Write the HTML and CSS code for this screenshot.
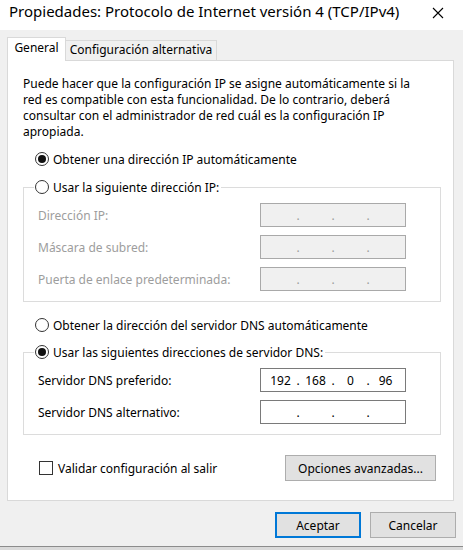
FILE: index.html
```html
<!DOCTYPE html>
<html lang="es">
<head>
<meta charset="utf-8">
<title>Propiedades: Protocolo de Internet versión 4 (TCP/IPv4)</title>
<link rel="stylesheet" href="styles.css">
</head>
<body>
<div class="window">
  <div class="titlebar">
    <span class="title">Propiedades: Protocolo de Internet versión 4 (TCP/IPv4)</span>
    <span class="close"><svg width="12" height="12" viewBox="0 0 12 12"><path d="M1 1 L11 11 M11 1 L1 11" stroke="#000" stroke-width="1.1" fill="none"/></svg></span>
  </div>
  <div class="main">
    <div class="tabs">
      <div class="tab active">General</div>
      <div class="tab">Configuración alternativa</div>
    </div>
    <div class="panel">
      <p class="intro">Puede hacer que la configuración IP se asigne automáticamente si la<br>red es compatible con esta funcionalidad. De lo contrario, deberá<br>consultar con el administrador de red cuál es la configuración IP<br>apropiada.</p>

      <div class="option first"><span class="radio checked"></span><span>Obtener una dirección IP automáticamente</span></div>

      <fieldset class="group">
        <legend><span class="option"><span class="radio"></span><span>Usar la siguiente dirección IP:</span></span></legend>
        <div class="field disabled">
          <span class="flabel">Dirección IP:</span>
          <div class="ip"><span class="seg"></span><span class="dot">.</span><span class="seg"></span><span class="dot">.</span><span class="seg"></span><span class="dot">.</span><span class="seg"></span></div>
        </div>
        <div class="field disabled">
          <span class="flabel">Máscara de subred:</span>
          <div class="ip"><span class="seg"></span><span class="dot">.</span><span class="seg"></span><span class="dot">.</span><span class="seg"></span><span class="dot">.</span><span class="seg"></span></div>
        </div>
        <div class="field disabled">
          <span class="flabel">Puerta de enlace predeterminada:</span>
          <div class="ip"><span class="seg"></span><span class="dot">.</span><span class="seg"></span><span class="dot">.</span><span class="seg"></span><span class="dot">.</span><span class="seg"></span></div>
        </div>
      </fieldset>

      <div class="option dns-auto"><span class="radio"></span><span>Obtener la dirección del servidor DNS automáticamente</span></div>

      <fieldset class="group dns">
        <legend><span class="option"><span class="radio checked"></span><span>Usar las siguientes direcciones de servidor DNS:</span></span></legend>
        <div class="field">
          <span class="flabel">Servidor DNS preferido:</span>
          <div class="ip"><span class="seg">192</span><span class="dot">.</span><span class="seg">168</span><span class="dot">.</span><span class="seg">0</span><span class="dot">.</span><span class="seg">96</span></div>
        </div>
        <div class="field">
          <span class="flabel">Servidor DNS alternativo:</span>
          <div class="ip"><span class="seg"></span><span class="dot">.</span><span class="seg"></span><span class="dot">.</span><span class="seg"></span><span class="dot">.</span><span class="seg"></span></div>
        </div>
      </fieldset>

      <div class="bottom-row">
        <div class="check"><span class="checkbox"></span><span>Validar configuración al salir</span></div>
        <button class="btn adv">Opciones avanzadas...</button>
      </div>
    </div>
    <div class="footer">
      <button class="btn primary">Aceptar</button>
      <button class="btn cancel">Cancelar</button>
    </div>
  </div>
  <div class="edge"></div>
</div>
</body>
</html>
```

FILE: styles.css
```css
* { box-sizing: border-box; }
html, body { margin: 0; padding: 0; }
body {
  width: 463px;
  height: 550px;
  overflow: hidden;
  background: #f0f0f0;
  font-family: "Noto Sans", "Open Sans", sans-serif;
  font-size: 12px;
  color: #000;
}
.window { display: flex; flex-direction: column; width: 463px; height: 550px; }

.titlebar {
  height: 30px;
  background: #fff;
  display: flex;
  justify-content: space-between;
  align-items: flex-start;
  padding: 1px 0 0 9px;
}
.title { font-size: 15px; line-height: 20px; white-space: nowrap; }
.close { width: 46px; height: 24px; display: flex; align-items: center; justify-content: center; padding-right: 4px; }

.main { flex: 1; display: flex; flex-direction: column; }

.tabs {
  display: flex;
  align-items: flex-end;
  margin: 7px 0 0 7px;
  height: 23px;
}
.tab {
  border: 1px solid #d9d9d9;
  border-bottom: none;
  text-align: center;
  white-space: nowrap;
}
.tab.active {
  width: 59px;
  height: 24px;
  background: #fff;
  margin-bottom: -1px;
  position: relative;
  z-index: 1;
  line-height: 18px;
  padding-top: 1px;
}
.tab:not(.active) {
  width: 151px;
  height: 20px;
  background: #f0f0f0;
  border-left: none;
  line-height: 18px;
}

.panel {
  margin-left: 7px;
  width: 447px;
  height: 441px;
  background: #fff;
  border: 1px solid #d9d9d9;
  padding: 15px 12px 0 15px;
  display: flex;
  flex-direction: column;
}
.intro { margin: 0; line-height: 16px; white-space: nowrap; }

.option { display: flex; align-items: center; height: 16px; white-space: nowrap; }
.option.first { margin: 11px 0 0 12px; }
.option.dns-auto { margin: 15px 0 0 12px; }

.radio {
  width: 14px;
  height: 14px;
  border: 1px solid #333;
  border-radius: 50%;
  background: #fff;
  margin-right: 4px;
  display: flex;
  align-items: center;
  justify-content: center;
  flex: none;
}
.radio.checked::after {
  content: "";
  width: 8px;
  height: 8px;
  border-radius: 50%;
  background: #111;
}

.group {
  margin: 12px 0 0 0;
  border: 1px solid #dcdcdc;
  padding: 8px 34px 10px 10px;
  min-width: 0;
}
.group.dns { margin-top: 11px; }
.group legend { padding: 0 2px 0 1px; }

.field {
  display: flex;
  align-items: center;
  height: 24px;
  margin: 0 0 8px 4px;
}
.field:last-child { margin-bottom: 0; }
.flabel { flex: 1; white-space: nowrap; }
.field.disabled .flabel { color: #9d9d9d; }

.ip {
  width: 146px;
  height: 24px;
  border: 1px solid #7a7a7a;
  background: #fff;
  display: flex;
  align-items: center;
  padding-left: 4px;
  flex: none;
}
.field.disabled .ip { background: #f0f0f0; border-color: #a9a9a9; color: #9d9d9d; }
.seg { width: 31px; text-align: center; }
.dot { width: 4px; text-align: center; }

.bottom-row {
  display: flex;
  align-items: center;
  justify-content: space-between;
  margin: 20px 5px 0 16px;
}
.check { display: flex; align-items: center; white-space: nowrap; }
.checkbox {
  width: 14px;
  height: 14px;
  border: 1px solid #333;
  background: #fff;
  margin-right: 5px;
}

.btn {
  font-family: inherit;
  font-size: 12px;
  color: #000;
  background: #e1e1e1;
  border: 1px solid #adadad;
  padding: 0;
  height: 26px;
  white-space: nowrap;
}
.btn.adv { width: 151px; }
.footer {
  display: flex;
  justify-content: flex-end;
  gap: 9px;
  margin-top: 11px;
  padding-right: 7px;
}
.footer .btn { width: 86px; height: 26px; }
.btn.primary { border: 2px solid #0078d7; }

.edge {
  margin-top: auto;
  height: 4px;
  border-top: 1px solid #8c8c8c;
  background: #dadada;
}
```
